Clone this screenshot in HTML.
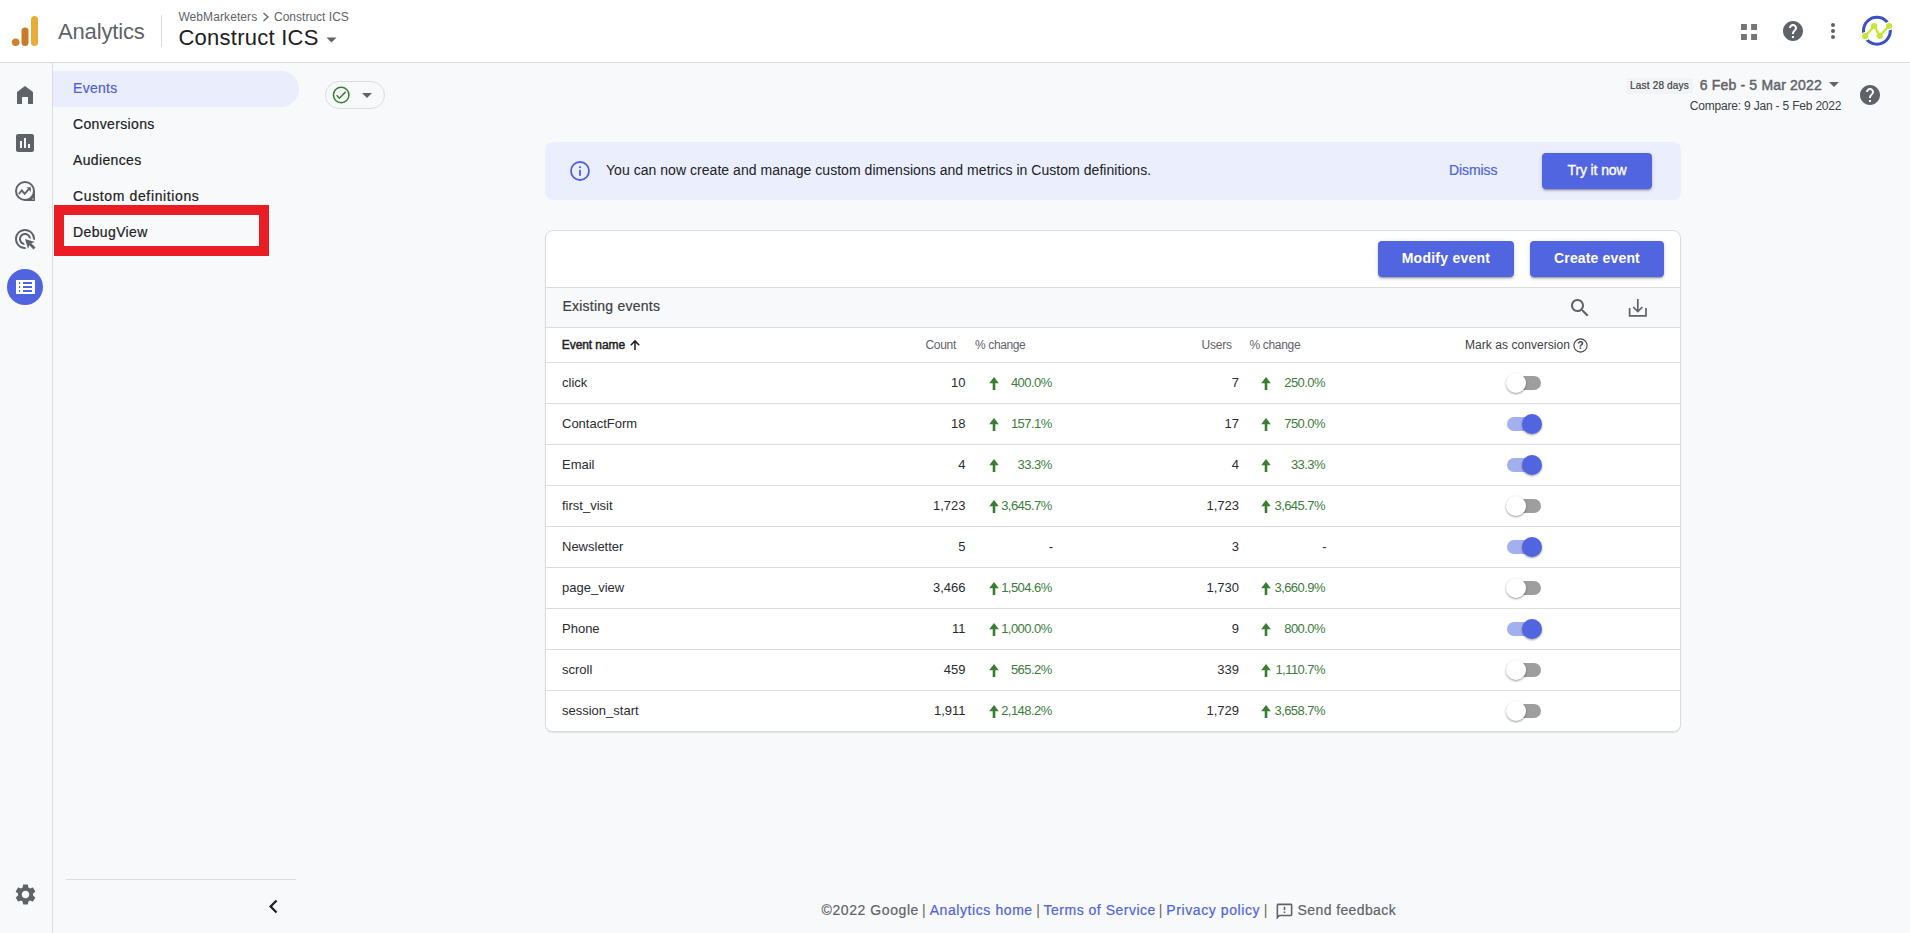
<!DOCTYPE html>
<html lang="en">
<head>
<meta charset="utf-8">
<title>Analytics | Events</title>
<style>
*{box-sizing:border-box;margin:0;padding:0}
html,body{width:1910px;height:933px;overflow:hidden}
body{background:#f8f9fa;font-family:"Liberation Sans",Arial,sans-serif;color:#202124;position:relative}
.abs{position:absolute}
.t{position:absolute;white-space:nowrap;line-height:1}
svg{display:block}
/* header */
#hdr{position:absolute;left:0;top:0;width:1910px;height:63px;background:#fff;border-bottom:1px solid #dadce0}
#rail{position:absolute;left:0;top:63px;width:53px;height:870px;border-right:1px solid #dadce0}
.nav{position:absolute;left:73px;font-size:14px;line-height:16px;color:#202124;white-space:nowrap;-webkit-text-stroke:.2px}
.btn{position:absolute;height:36px;background:#5165e0;color:#fff;border-radius:4px;font-size:14px;font-weight:bold;text-align:center;line-height:34px;box-shadow:0 3px 1px -2px rgba(0,0,0,.2),0 2px 2px 0 rgba(0,0,0,.14),0 1px 5px 0 rgba(0,0,0,.12);white-space:nowrap}
.row{position:absolute;left:546px;width:1134px;height:41px;border-top:1px solid #dadce0;background:#fff}
.cell{position:absolute;top:12px;font-size:13px;line-height:15px;white-space:nowrap;color:#2a2b2f}
.r{text-align:right}
.g{color:#3b7d3b;letter-spacing:-0.55px}
.tog{position:absolute;left:961px;top:13px;width:34px;height:14px}
.tog i{position:absolute;left:0;top:0;width:34px;height:14px;border-radius:7px;background:#9e9e9e}
.tog b{position:absolute;left:-1px;top:-3px;width:20px;height:20px;border-radius:50%;background:#fff;box-shadow:0 1px 2px rgba(0,0,0,.3),0 1px 3px rgba(0,0,0,.12)}
.tog.on i{background:#a3b0ee}
.tog.on b{left:15px;background:#5165e0}
.arr{position:absolute;top:14px}
</style>
</head>
<body>
<div id="hdr">
<svg class="abs" style="left:0;top:0" width="60" height="62" viewBox="0 0 60 62">
<rect x="31" y="16" width="7" height="30" rx="3.5" fill="#e6ae36"/>
<rect x="21.5" y="27.5" width="7" height="18.5" rx="3.5" fill="#ca7a27"/>
<circle cx="15.7" cy="42.2" r="3.8" fill="#d07f2a"/>
</svg>
<div class="t" id="t-analytics" style="left:58px;top:18.5px;font-size:22px;line-height:26px;color:#5f6368;letter-spacing:-0.15px">Analytics</div>
<div class="abs" style="left:161px;top:15px;width:1px;height:32px;background:#dadce0"></div>
<div class="t" id="bc1" style="left:178.4px;top:10px;font-size:12px;line-height:14px;color:#5f6368;letter-spacing:0.09px">WebMarketers</div>
<div class="t" id="bc2" style="left:274px;top:10px;font-size:12px;line-height:14px;color:#5f6368;letter-spacing:0.01px">Construct ICS</div>
<svg class="abs" style="left:262px;top:12px" width="8" height="10" viewBox="0 0 8 10"><path d="M1.5 1 L6 5 L1.5 9" fill="none" stroke="#5f6368" stroke-width="1.3"/></svg>
<div class="t" id="t-prop" style="left:178.4px;top:25px;font-size:22px;line-height:26px;color:#202124;letter-spacing:0.26px">Construct ICS</div>
<svg class="abs" style="left:326px;top:37px" width="11" height="6" viewBox="0 0 11 6"><path d="M0.5 0.5h10L5.5 5.5z" fill="#5f6368"/></svg>
<!-- apps -->
<svg class="abs" style="left:1741px;top:24px" width="16" height="16" viewBox="0 0 16 16"><path d="M0 0h5.900v5.900H0zM10.100 0H16v5.900h-5.900zM0 10.100h5.900V16H0zM10.100 10.100H16V16h-5.900z" fill="#757575"/></svg>
<!-- help -->
<svg class="abs" style="left:1781px;top:19px" width="24" height="24" viewBox="0 0 24 24"><path fill="#5f6368" d="M12 2C6.48 2 2 6.48 2 12s4.480 10 10 10 10-4.480 10-10S17.520 2 12 2zm1 17h-2v-2h2v2zm2.070-7.750l-.9.920C13.450 12.900 13 13.500 13 15h-2v-.5c0-1.100.450-2.100 1.170-2.830l1.240-1.260c.370-.360.590-.860.590-1.410 0-1.100-.9-2-2-2s-2 .9-2 2H8c0-2.210 1.790-4 4-4s4 1.790 4 4c0 .880-.360 1.680-.930 2.250z"/></svg>
<!-- more -->
<svg class="abs" style="left:1821px;top:19px" width="24" height="24" viewBox="0 0 24 24"><circle cx="12" cy="6" r="2" fill="#5f6368"/><circle cx="12" cy="12" r="2" fill="#5f6368"/><circle cx="12" cy="18" r="2" fill="#5f6368"/></svg>
<!-- avatar -->
<svg class="abs" style="left:1861px;top:15px" width="32" height="32" viewBox="0 0 32 32">
<circle cx="15.900" cy="15.750" r="13.400" fill="#fff" stroke="#3a4fc0" stroke-width="3"/>
<path d="M4.300 21.200 L13.200 11 L18.700 20.800 L28 11" fill="none" stroke="#fff" stroke-width="4.600" stroke-linejoin="round" stroke-linecap="round"/>
<circle cx="4.300" cy="21.200" r="4.200" fill="#fff"/><circle cx="28" cy="11" r="4.200" fill="#fff"/>
<path d="M4.300 21.200 L13.200 11 L18.700 20.800 L28 11" fill="none" stroke="#c5e636" stroke-width="2.300" stroke-linejoin="round" stroke-linecap="round"/>
<circle cx="4.300" cy="21.200" r="3.100" fill="#c5e636"/><circle cx="13.200" cy="11" r="3.100" fill="#c5e636"/><circle cx="18.700" cy="20.800" r="3.100" fill="#c5e636"/><circle cx="28" cy="11" r="3.100" fill="#c5e636"/>
</svg>
</div>
<div id="rail"></div>
<!-- rail icons (page coords) -->
<svg class="abs" style="left:13px;top:83px" width="24" height="24" viewBox="0 0 24 24"><path fill="#5f6368" d="M12 3L4 9v12h5v-7h6v7h5V9z"/></svg>
<svg class="abs" style="left:13px;top:131px" width="24" height="24" viewBox="0 0 24 24"><path fill="#5f6368" d="M19 3H5c-1.100 0-2 .9-2 2v14c0 1.100.9 2 2 2h14c1.100 0 2-.9 2-2V5c0-1.100-.9-2-2-2zM9 17H7v-7h2v7zm4 0h-2V7h2v10zm4 0h-2v-4h2v4z"/></svg>
<svg class="abs" style="left:13.100px;top:178.800px" width="24" height="24" viewBox="0 0 24 24"><path fill="#5f6368" fill-rule="evenodd" d="M12 2a10 10 0 1 0 0 20h10V12A10 10 0 0 0 12 2zM12 4a8 8 0 1 1 0 16a8 8 0 1 1 0-16z"/><circle cx="20" cy="20" r="0.700" fill="#f8f9fa"/><path fill="none" stroke="#5f6368" stroke-width="1.900" d="M5.800 15l3-3.600 2.800 3.400 4.600-5.200"/><path fill="#5f6368" d="M13.600 8.300h4.300v4.700z"/></svg>
<svg class="abs" style="left:13px;top:227px" width="24" height="24" viewBox="0 0 24 24"><path fill="#5f6368" d="M11.710 17.990C8.530 17.840 6 15.220 6 12c0-3.310 2.690-6 6-6 3.220 0 5.840 2.530 5.990 5.710l-2.100-.630C15.480 9.310 13.890 8 12 8c-2.210 0-4 1.790-4 4 0 1.890 1.310 3.480 3.080 3.890l.630 2.100zM22 12c0 .3-.010.6-.040.9l-1.970-.590C20 12.210 20 12.100 20 12c0-4.420-3.580-8-8-8s-8 3.580-8 8 3.580 8 8 8c.1 0 .210 0 .310-.010l.590 1.970c-.3.030-.6.040-.9.040-5.520 0-10-4.480-10-10S6.480 2 12 2s10 4.480 10 10zm-3.770 4.260L22 15l-10-3 3 10 1.260-3.770 4.270 4.270 1.980-1.980-4.280-4.260z"/></svg>
<div class="abs" style="left:7px;top:269px;width:36px;height:36px;border-radius:50%;background:#5064e0"></div>
<svg class="abs" style="left:16px;top:280px" width="19" height="14" viewBox="0 0 19 14"><path fill="#fff" fill-rule="evenodd" d="M0 0h19v14H0zM2.900 2.100v1.800h1.200V2.100zM2.900 6.100v1.800h1.200V6.100zM2.900 10.100v1.800h1.200v-1.800zM7 2.100v1.800h9V2.100zM7 6.100v1.800h9V6.100zM7 10.100v1.800h9v-1.800z"/></svg>
<svg class="abs" style="left:12.500px;top:881.500px" width="25" height="25" viewBox="0 0 24 24"><path fill="#5f6368" d="M19.140 12.940c.040-.3.060-.610.060-.940 0-.320-.020-.640-.070-.940l2.030-1.580c.180-.140.230-.410.120-.610l-1.920-3.320c-.120-.220-.370-.290-.590-.220l-2.390.960c-.5-.380-1.030-.7-1.620-.940l-.360-2.540c-.040-.240-.240-.410-.480-.410h-3.840c-.240 0-.430.170-.470.410l-.360 2.540c-.590.240-1.130.570-1.620.940l-2.390-.960c-.220-.080-.470 0-.590.220L2.740 8.870c-.120.210-.080.470.120.610l2.030 1.580c-.050.300-.090.630-.090.940s.020.640.070.940l-2.030 1.580c-.180.140-.230.410-.120.610l1.920 3.320c.120.220.370.290.590.220l2.390-.960c.5.380 1.030.7 1.620.940l.360 2.540c.050.240.240.410.480.410h3.840c.240 0 .440-.170.470-.410l.360-2.540c.590-.240 1.130-.560 1.620-.940l2.390.960c.220.080.470 0 .590-.220l1.920-3.320c.120-.220.070-.470-.120-.610l-2.010-1.580zM12 15.600c-1.980 0-3.600-1.620-3.600-3.600s1.620-3.600 3.600-3.600 3.600 1.620 3.600 3.600-1.620 3.600-3.600 3.600z"/></svg>
<!-- secondary nav -->
<div class="abs" style="left:53px;top:71px;width:246px;height:36px;border-radius:0 18px 18px 0;background:#eaedfc"></div>
<div class="nav" id="n1" style="top:80.3px;color:#4f5fd8;letter-spacing:0.30px">Events</div>
<div class="nav" id="n2" style="top:116px;letter-spacing:0.35px">Conversions</div>
<div class="nav" id="n3" style="top:152px;letter-spacing:0.35px">Audiences</div>
<div class="nav" id="n4" style="top:188px;letter-spacing:0.63px">Custom definitions</div>
<div class="abs" style="left:54px;top:205px;width:215px;height:51px;border:10px solid #ea1c24"></div>
<div class="nav" id="n5" style="top:224px;letter-spacing:0.38px">DebugView</div>
<div class="abs" style="left:66px;top:879px;width:230px;height:1px;background:#dadce0"></div>
<svg class="abs" style="left:259.500px;top:892.500px" width="27" height="27" viewBox="0 0 24 24"><path fill="#202124" d="M15.410 7.410L14 6l-6 6 6 6 1.410-1.410L10.830 12z"/></svg>
<!-- status chip -->
<div class="abs" style="left:325px;top:81px;width:60px;height:28px;border-radius:14px;border:1px solid #dadce0;background:#f8f9fa"></div>
<svg class="abs" style="left:332px;top:86px" width="18" height="18" viewBox="0 0 18 18"><circle cx="9.200" cy="9" r="7.750" fill="none" stroke="#3a7d34" stroke-width="1.500"/><path d="M4.600 9.300L7.400 12.200L13.600 5.900" fill="none" stroke="#3a7d34" stroke-width="1.500"/></svg>
<svg class="abs" style="left:362px;top:93px" width="10" height="5" viewBox="0 0 10 5"><path d="M0 0h10L5 5z" fill="#5f6368"/></svg>
<div id="main">
<!-- date range -->
<div class="abs" style="left:1626px;top:78px;width:67px;height:16px;background:#f1f3f4;border-radius:2px"></div>
<div class="t" id="t-l28" style="left:1630px;top:80px;font-size:10px;line-height:12px;color:#3c4043;letter-spacing:0.19px;-webkit-text-stroke:0.2px #3c4043">Last 28 days</div>
<div class="t" id="t-date" style="left:1699.7px;top:77px;font-size:14px;line-height:16px;-webkit-text-stroke:0.45px #5f6368;color:#5f6368;letter-spacing:0.18px">6 Feb - 5 Mar 2022</div>
<svg class="abs" style="left:1829px;top:82px" width="10" height="5" viewBox="0 0 10 5"><path d="M0 0h10L5 5z" fill="#5f6368"/></svg>
<div class="t" id="t-cmp" style="left:1689.7px;top:98.5px;font-size:12px;line-height:14px;color:#3c4043;letter-spacing:-0.19px">Compare: 9 Jan - 5 Feb 2022</div>
<svg class="abs" style="left:1858px;top:83px" width="24" height="24" viewBox="0 0 24 24"><path fill="#5f6368" d="M12 2C6.48 2 2 6.48 2 12s4.480 10 10 10 10-4.480 10-10S17.520 2 12 2zm1 17h-2v-2h2v2zm2.070-7.750l-.9.920C13.450 12.900 13 13.500 13 15h-2v-.5c0-1.100.450-2.100 1.170-2.830l1.240-1.260c.370-.360.590-.860.590-1.410 0-1.100-.9-2-2-2s-2 .9-2 2H8c0-2.210 1.790-4 4-4s4 1.790 4 4c0 .880-.360 1.680-.930 2.250z"/></svg>
<!-- banner -->
<div class="abs" style="left:545px;top:142px;width:1136px;height:58px;background:#ebeefd;border-radius:8px"></div>
<svg class="abs" style="left:568px;top:159px" width="24" height="24" viewBox="0 0 24 24"><circle cx="12" cy="12" r="9" fill="none" stroke="#5063df" stroke-width="1.800"/><rect x="11.100" y="10.800" width="1.800" height="6" fill="#5063df"/><rect x="11.100" y="7.200" width="1.800" height="1.900" fill="#5063df"/></svg>
<div class="t" id="t-ban" style="left:606px;top:162px;font-size:14px;line-height:16px;color:#202124;letter-spacing:0.04px">You can now create and manage custom dimensions and metrics in Custom definitions.</div>
<div class="t" id="t-dis" style="left:1449px;top:162px;font-size:14px;line-height:16px;color:#5063df;letter-spacing:-0.10px;-webkit-text-stroke:.2px">Dismiss</div>
<div class="btn" id="b-try" style="left:1542px;top:153px;width:110px"><span id="bt1" style="position:relative;top:-0.2px;font-weight:normal;-webkit-text-stroke:0.35px #fff;letter-spacing:-0.11px">Try it now</span></div>
<!-- card -->
<div class="abs" style="left:545px;top:230px;width:1136px;height:502px;background:#fff;border:1px solid #dadce0;border-radius:8px;box-shadow:0 1px 1px rgba(60,64,67,.12)"></div>
<div class="btn" id="b-mod" style="left:1378px;top:241px;width:136px"><span id="bt2" style="position:relative;top:0px;letter-spacing:0.25px">Modify event</span></div>
<div class="btn" id="b-cre" style="left:1530px;top:241px;width:134px"><span id="bt3" style="position:relative;top:0px;letter-spacing:0.15px">Create event</span></div>
<div class="abs" style="left:546px;top:287px;width:1134px;height:41px;background:#f8f9fa;border-top:1px solid #dadce0;border-bottom:1px solid #dadce0"></div>
<div class="t" id="t-ex" style="left:562.4px;top:298.3px;font-size:14px;line-height:16px;color:#3c4043;letter-spacing:0.24px;-webkit-text-stroke:.2px">Existing events</div>
<svg class="abs" style="left:1568px;top:296px" width="24" height="24" viewBox="0 0 24 24"><path fill="#5f6368" d="M15.500 14h-.790l-.280-.270C15.410 12.590 16 11.110 16 9.500 16 5.910 13.090 3 9.500 3S3 5.910 3 9.500 5.910 16 9.500 16c1.610 0 3.090-.590 4.230-1.570l.270.280v.790l5 4.990L20.490 19l-4.990-5zm-6 0C7.010 14 5 11.990 5 9.500S7.010 5 9.500 5 14 7.010 14 9.500 11.990 14 9.500 14z"/></svg>
<svg class="abs" style="left:1626px;top:296px" width="24" height="24" viewBox="0 0 24 24"><path fill="none" stroke="#5f6368" stroke-width="1.700" d="M11.800 3v12.300M7.200 11l4.600 4.600 4.600-4.600M3.600 12v7.850h16.400V12"/></svg>
<!-- table header -->
<div class="t" id="h1" style="left:561.8px;top:337.6px;font-size:12px;line-height:14px;-webkit-text-stroke:0.450px #202124;color:#202124;letter-spacing:-0.08px">Event name</div>
<svg class="abs" style="left:629px;top:339px" width="12" height="12" viewBox="0 0 12 12"><path fill="none" stroke="#202124" stroke-width="1.600" d="M6 11V2M1.800 6.200L6 2l4.200 4.200"/></svg>
<div class="t" id="h2" style="left:925.5px;top:337.6px;font-size:12px;line-height:14px;color:#5f6368;letter-spacing:-0.32px">Count</div>
<div class="t" id="h3" style="left:975px;top:337.6px;font-size:12px;line-height:14px;color:#5f6368;letter-spacing:-0.37px">% change</div>
<div class="t" id="h4" style="left:1201.5px;top:337.6px;font-size:12px;line-height:14px;color:#5f6368;letter-spacing:-0.18px">Users</div>
<div class="t" id="h5" style="left:1249.4px;top:337.6px;font-size:12px;line-height:14px;color:#5f6368;letter-spacing:-0.31px">% change</div>
<div class="t" id="h6" style="left:1465px;top:337.6px;font-size:12px;line-height:14px;color:#3c4043;letter-spacing:0.05px">Mark as conversion</div>
<svg class="abs" style="left:1573px;top:338px" width="15" height="15" viewBox="0 0 15 15"><circle cx="7.500" cy="7.500" r="6.600" fill="none" stroke="#3c4043" stroke-width="1.100"/><text x="7.500" y="11.300" text-anchor="middle" font-family="Liberation Sans, Arial, sans-serif" font-size="10.500" font-weight="bold" fill="#3c4043">?</text></svg>
<div class="row" id="r0" style="top:362px"><div class="cell" id="r0n" style="left:16px">click</div><div class="cell r" id="r0c" style="right:714.500px">10</div><svg class="arr" style="left:442.500px" width="10" height="13" viewBox="0 0 10 13"><path fill="#3b7d33" d="M5 0L9.800 6.200H6.300V13H3.700V6.200H0.200z"/></svg><div class="cell r g" id="r0p" style="right:628.300px">400.0%</div><div class="cell r" id="r0u" style="right:441px">7</div><svg class="arr" style="left:715.400px" width="10" height="13" viewBox="0 0 10 13"><path fill="#3b7d33" d="M5 0L9.800 6.200H6.300V13H3.700V6.200H0.200z"/></svg><div class="cell r g" id="r0q" style="right:355px">250.0%</div><div class="tog"><i></i><b></b></div></div>
<div class="row" id="r1" style="top:403px"><div class="cell" id="r1n" style="left:16px">ContactForm</div><div class="cell r" id="r1c" style="right:714.500px">18</div><svg class="arr" style="left:442.500px" width="10" height="13" viewBox="0 0 10 13"><path fill="#3b7d33" d="M5 0L9.800 6.200H6.300V13H3.700V6.200H0.200z"/></svg><div class="cell r g" id="r1p" style="right:628.300px">157.1%</div><div class="cell r" id="r1u" style="right:441px">17</div><svg class="arr" style="left:715.400px" width="10" height="13" viewBox="0 0 10 13"><path fill="#3b7d33" d="M5 0L9.800 6.200H6.300V13H3.700V6.200H0.200z"/></svg><div class="cell r g" id="r1q" style="right:355px">750.0%</div><div class="tog on"><i></i><b></b></div></div>
<div class="row" id="r2" style="top:444px"><div class="cell" id="r2n" style="left:16px">Email</div><div class="cell r" id="r2c" style="right:714.500px">4</div><svg class="arr" style="left:442.500px" width="10" height="13" viewBox="0 0 10 13"><path fill="#3b7d33" d="M5 0L9.800 6.200H6.300V13H3.700V6.200H0.200z"/></svg><div class="cell r g" id="r2p" style="right:628.300px">33.3%</div><div class="cell r" id="r2u" style="right:441px">4</div><svg class="arr" style="left:715.400px" width="10" height="13" viewBox="0 0 10 13"><path fill="#3b7d33" d="M5 0L9.800 6.200H6.300V13H3.700V6.200H0.200z"/></svg><div class="cell r g" id="r2q" style="right:355px">33.3%</div><div class="tog on"><i></i><b></b></div></div>
<div class="row" id="r3" style="top:485px"><div class="cell" id="r3n" style="left:16px">first_visit</div><div class="cell r" id="r3c" style="right:714.500px">1,723</div><svg class="arr" style="left:442.500px" width="10" height="13" viewBox="0 0 10 13"><path fill="#3b7d33" d="M5 0L9.800 6.200H6.300V13H3.700V6.200H0.200z"/></svg><div class="cell r g" id="r3p" style="right:628.300px">3,645.7%</div><div class="cell r" id="r3u" style="right:441px">1,723</div><svg class="arr" style="left:715.400px" width="10" height="13" viewBox="0 0 10 13"><path fill="#3b7d33" d="M5 0L9.800 6.200H6.300V13H3.700V6.200H0.200z"/></svg><div class="cell r g" id="r3q" style="right:355px">3,645.7%</div><div class="tog"><i></i><b></b></div></div>
<div class="row" id="r4" style="top:526px"><div class="cell" id="r4n" style="left:16px">Newsletter</div><div class="cell r" id="r4c" style="right:714.500px">5</div><div class="cell r" id="r4p" style="right:626.800px">-</div><div class="cell r" id="r4u" style="right:441px">3</div><div class="cell r" id="r4q" style="right:353.500px">-</div><div class="tog on"><i></i><b></b></div></div>
<div class="row" id="r5" style="top:567px"><div class="cell" id="r5n" style="left:16px">page_view</div><div class="cell r" id="r5c" style="right:714.500px">3,466</div><svg class="arr" style="left:442.500px" width="10" height="13" viewBox="0 0 10 13"><path fill="#3b7d33" d="M5 0L9.800 6.200H6.300V13H3.700V6.200H0.200z"/></svg><div class="cell r g" id="r5p" style="right:628.300px">1,504.6%</div><div class="cell r" id="r5u" style="right:441px">1,730</div><svg class="arr" style="left:715.400px" width="10" height="13" viewBox="0 0 10 13"><path fill="#3b7d33" d="M5 0L9.800 6.200H6.300V13H3.700V6.200H0.200z"/></svg><div class="cell r g" id="r5q" style="right:355px">3,660.9%</div><div class="tog"><i></i><b></b></div></div>
<div class="row" id="r6" style="top:608px"><div class="cell" id="r6n" style="left:16px">Phone</div><div class="cell r" id="r6c" style="right:714.500px">11</div><svg class="arr" style="left:442.500px" width="10" height="13" viewBox="0 0 10 13"><path fill="#3b7d33" d="M5 0L9.800 6.200H6.300V13H3.700V6.200H0.200z"/></svg><div class="cell r g" id="r6p" style="right:628.300px">1,000.0%</div><div class="cell r" id="r6u" style="right:441px">9</div><svg class="arr" style="left:715.400px" width="10" height="13" viewBox="0 0 10 13"><path fill="#3b7d33" d="M5 0L9.800 6.200H6.300V13H3.700V6.200H0.200z"/></svg><div class="cell r g" id="r6q" style="right:355px">800.0%</div><div class="tog on"><i></i><b></b></div></div>
<div class="row" id="r7" style="top:649px"><div class="cell" id="r7n" style="left:16px">scroll</div><div class="cell r" id="r7c" style="right:714.500px">459</div><svg class="arr" style="left:442.500px" width="10" height="13" viewBox="0 0 10 13"><path fill="#3b7d33" d="M5 0L9.800 6.200H6.300V13H3.700V6.200H0.200z"/></svg><div class="cell r g" id="r7p" style="right:628.300px">565.2%</div><div class="cell r" id="r7u" style="right:441px">339</div><svg class="arr" style="left:715.400px" width="10" height="13" viewBox="0 0 10 13"><path fill="#3b7d33" d="M5 0L9.800 6.200H6.300V13H3.700V6.200H0.200z"/></svg><div class="cell r g" id="r7q" style="right:355px">1,110.7%</div><div class="tog"><i></i><b></b></div></div>
<div class="row" id="r8" style="top:690px;border-radius:0 0 7px 7px"><div class="cell" id="r8n" style="left:16px">session_start</div><div class="cell r" id="r8c" style="right:714.500px">1,911</div><svg class="arr" style="left:442.500px" width="10" height="13" viewBox="0 0 10 13"><path fill="#3b7d33" d="M5 0L9.800 6.200H6.300V13H3.700V6.200H0.200z"/></svg><div class="cell r g" id="r8p" style="right:628.300px">2,148.2%</div><div class="cell r" id="r8u" style="right:441px">1,729</div><svg class="arr" style="left:715.400px" width="10" height="13" viewBox="0 0 10 13"><path fill="#3b7d33" d="M5 0L9.800 6.200H6.300V13H3.700V6.200H0.200z"/></svg><div class="cell r g" id="r8q" style="right:355px">3,658.7%</div><div class="tog"><i></i><b></b></div></div>
<!-- footer -->
<div class="t" id="f1" style="left:821.6px;top:902px;font-size:14px;line-height:16px;color:#5f6368;letter-spacing:0.57px;-webkit-text-stroke:.2px">©2022 Google</div>
<div class="t" id="f2" style="left:929.7px;top:902px;font-size:14px;line-height:16px;color:#5063df;letter-spacing:0.58px;-webkit-text-stroke:.2px">Analytics home</div>
<div class="t" id="f3" style="left:1043.5px;top:902px;font-size:14px;line-height:16px;color:#5063df;letter-spacing:0.51px;-webkit-text-stroke:.2px">Terms of Service</div>
<div class="t" id="f4" style="left:1166.3px;top:902px;font-size:14px;line-height:16px;color:#5063df;letter-spacing:0.59px;-webkit-text-stroke:.2px">Privacy policy</div>
<div class="t" style="left:921.9px;top:902px;font-size:14px;line-height:16px;color:#6b6460">|</div>
<div class="t" style="left:1036.2px;top:902px;font-size:14px;line-height:16px;color:#6b6460">|</div>
<div class="t" style="left:1158.7px;top:902px;font-size:14px;line-height:16px;color:#6b6460">|</div>
<div class="t" style="left:1263.8px;top:902px;font-size:14px;line-height:16px;color:#6b6460">|</div>
<svg class="abs" style="left:1275px;top:902px" width="19" height="19" viewBox="0 0 24 24"><path fill="#5f6368" d="M20 2H4c-1.100 0-1.990.9-1.990 2L2 22l4-4h14c1.100 0 2-.9 2-2V4c0-1.100-.9-2-2-2zm0 14H5.170L4 17.170V4h16v12zm-9-4h2v2h-2zm0-6h2v4h-2z"/></svg>
<div class="t" id="t-fb" style="left:1297.6px;top:902px;font-size:14px;line-height:16px;color:#5f6368;letter-spacing:0.39px;-webkit-text-stroke:.2px">Send feedback</div>
</div>
</body>
</html>
